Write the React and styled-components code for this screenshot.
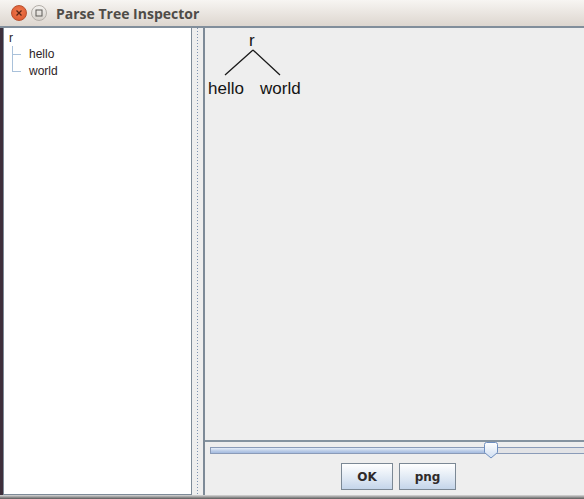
import React from 'react'
import styled, { createGlobalStyle } from 'styled-components'

const GlobalStyle = createGlobalStyle`
  html, body {
    margin: 0;
    padding: 0;
    background: #3b2c38;
    overflow: hidden;
  }
  body {
    font-family: "Liberation Sans", Arial, sans-serif;
  }
`

const Window = styled.div`
  width: 584px;
  height: 499px;
  display: flex;
  flex-direction: column;
  overflow: hidden;
`

const TitleBar = styled.div`
  height: 26px;
  flex: none;
  display: flex;
  align-items: center;
  background: linear-gradient(#f7f5f2, #ddd6cf);
  border-bottom: 2px solid #818e9b;
  padding-left: 11px;
  gap: 4px;
`

const CircleButton = styled.div`
  width: 14px;
  height: 14px;
  border-radius: 50%;
  display: flex;
  align-items: center;
  justify-content: center;
  background: ${p => (p.$close ? 'radial-gradient(circle at 50% 40%, #f07a4f, #d9532b)' : 'linear-gradient(#f4f2ef, #d6d1cb)')};
  border: 1px solid ${p => (p.$close ? '#b9512f' : '#b3aea8')};
`

const Title = styled.div`
  margin-left: 5px;
  font-family: "Open Sans", "Liberation Sans", sans-serif;
  font-weight: 700;
  font-size: 14px;
  color: #4f4c48;
`

const Body = styled.div`
  flex: 1;
  display: flex;
  min-height: 0;
`

const DesktopStrip = styled.div`
  width: 3px;
  flex: none;
  background: #3e2f3b;
`

const Main = styled.div`
  flex: 1;
  display: flex;
  flex-direction: column;
  background: #eeeeee;
`

const Split = styled.div`
  flex: 1;
  display: flex;
  min-height: 0;
`

const TreePanel = styled.div`
  width: 189px;
  flex: none;
  background: #ffffff;
  border: 1px solid #7d8a97;
  border-top: none;
  box-sizing: border-box;
  padding: 4px 0 0 5px;
  font-size: 12px;
  color: #2d2326;
`

const Divider = styled.div`
  width: 10px;
  flex: none;
  display: flex;
  justify-content: center;
  background: #eeeeee;
  &::after {
    content: '';
    width: 1px;
    background: repeating-linear-gradient(#7e92b0 0 1px, transparent 1px 3px);
  }
`

const RightPanel = styled.div`
  flex: 1;
  display: flex;
  flex-direction: column;
  border-left: 2px solid #7d8a97;
  margin-left: 1px;
`

const Canvas = styled.div`
  flex: 1;
  position: relative;
  background: #eeeeee;
  border-bottom: 2px solid #8593a0;
`

const Controls = styled.div`
  height: 53px;
  flex: none;
  display: flex;
  flex-direction: column;
  padding: 3px 0 0 5px;
  box-sizing: border-box;
  gap: 9px;
`

const SliderTrack = styled.div`
  position: relative;
  height: 5px;
  margin-top: 2px;
  border: 1px solid #8a9bb8;
  border-right: none;
  background: linear-gradient(90deg, transparent 0 279px, #e2e3e6 279px);
  &::before {
    content: '';
    position: absolute;
    left: 0;
    top: 0;
    bottom: 0;
    width: 279px;
    background: linear-gradient(#e6eefa, #b9cbe6 60%, #a4bbe0);
  }
`

const Thumb = styled.svg`
  position: absolute;
  left: 272px;
  top: -6px;
`

const ButtonRow = styled.div`
  display: flex;
  gap: 6px;
  padding-left: 131px;
`

const Button = styled.button`
  width: ${p => p.$w}px;
  height: 27px;
  border: 1px solid #7b8895;
  background: linear-gradient(#ffffff, #dde7f3 60%, #c4d5ea);
  font-family: "DejaVu Sans", "Liberation Sans", sans-serif;
  font-weight: 700;
  font-size: 12px;
  color: #2f2a2a;
  padding: 0;
`

const Bottom = styled.div`
  height: 4px;
  flex: none;
  background: linear-gradient(#d9d9d9, #5a5a5a);
`

const TreeRow = styled.div`
  display: flex;
  align-items: ${p => (p.$root ? 'flex-start' : 'center')};
  height: ${p => (p.$root ? 14 : 17)}px;
  line-height: ${p => (p.$root ? 12 : 17)}px;
`

const Branch = styled.div`
  width: 15px;
  height: 17px;
  margin-right: 5px;
  position: relative;
  &::before {
    content: '';
    position: absolute;
    left: 3px;
    top: 0;
    height: ${p => (p.$last ? '9px' : '17px')};
    border-left: 1px solid #a9c1da;
  }
  &::after {
    content: '';
    position: absolute;
    left: 3px;
    top: 8px;
    width: 9px;
    border-top: 1px solid #a9c1da;
  }
`

const NodeLabel = styled.div`
  position: absolute;
  font-size: 17px;
  color: #141414;
  line-height: 1;
  left: ${p => p.$x}px;
  top: ${p => p.$y}px;
`

const Edges = styled.svg`
  position: absolute;
  left: 0;
  top: 0;
`

export default function App() {
  return (
    <>
      <GlobalStyle />
      <Window>
        <TitleBar>
          <CircleButton $close>
            <svg width="8" height="8" viewBox="0 0 8 8">
              <path d="M1.5 1.5 L6.5 6.5 M6.5 1.5 L1.5 6.5" stroke="#5a2514" strokeWidth="1.3" />
            </svg>
          </CircleButton>
          <CircleButton>
            <svg width="8" height="8" viewBox="0 0 8 8">
              <rect x="1" y="1" width="6" height="6" fill="none" stroke="#5d5a56" strokeWidth="1" />
            </svg>
          </CircleButton>
          <Title>Parse Tree Inspector</Title>
        </TitleBar>
        <Body>
          <DesktopStrip />
          <Main>
            <Split>
              <TreePanel>
                <TreeRow $root>r</TreeRow>
                <TreeRow>
                  <Branch />
                  hello
                </TreeRow>
                <TreeRow>
                  <Branch $last />
                  world
                </TreeRow>
              </TreePanel>
              <Divider />
              <RightPanel>
                <Canvas>
                  <Edges width="120" height="60">
                    <path d="M48 22 L20 47 M48 22 L75 47" stroke="#1a1a1a" strokeWidth="1.3" fill="none" />
                  </Edges>
                  <NodeLabel $x={44} $y={4}>r</NodeLabel>
                  <NodeLabel $x={3} $y={52}>hello</NodeLabel>
                  <NodeLabel $x={55} $y={52}>world</NodeLabel>
                </Canvas>
                <Controls>
                  <SliderTrack>
                    <Thumb width="16" height="17" viewBox="0 0 16 17">
                      <defs>
                        <linearGradient id="tg" x1="0" y1="0" x2="0" y2="1">
                          <stop offset="0" stopColor="#ffffff" />
                          <stop offset="1" stopColor="#cfdef2" />
                        </linearGradient>
                      </defs>
                      <path d="M1.5 2.5 Q1.5 0.5 3.5 0.5 H12.5 Q14.5 0.5 14.5 2.5 V10.5 L8 16 L1.5 10.5 Z" fill="url(#tg)" stroke="#6f8fc0" strokeWidth="1" />
                    </Thumb>
                  </SliderTrack>
                  <ButtonRow>
                    <Button $w={52}>OK</Button>
                    <Button $w={57}>png</Button>
                  </ButtonRow>
                </Controls>
              </RightPanel>
            </Split>
          </Main>
        </Body>
        <Bottom />
      </Window>
    </>
  )
}
